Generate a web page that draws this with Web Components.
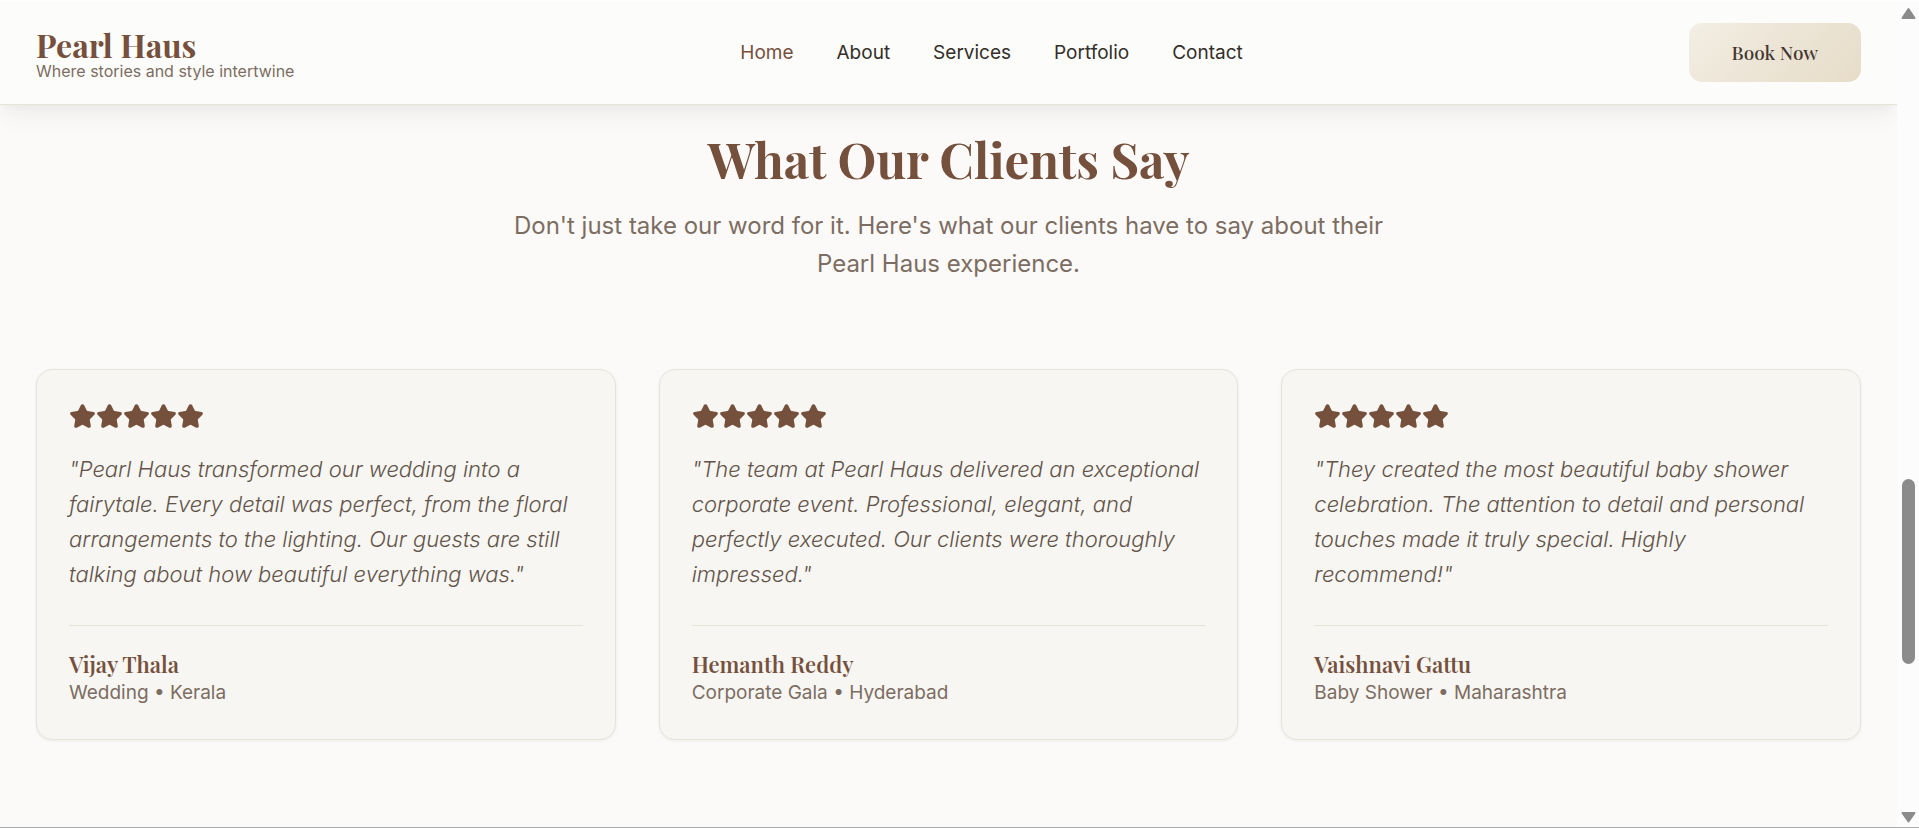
<!DOCTYPE html>
<html lang="en">
<head>
<meta charset="utf-8">
<meta name="viewport" content="width=device-width, initial-scale=1">
<title>Pearl Haus</title>
<style>
  :root {
    --brown: #75503d;
    --muted: #7c6d62;
    --ink: #332e29;
    --line: #e6e4da;
    --page: #fcfaf9;
    --card: #f7f6f2;
    --sans: Inter, "Liberation Sans", sans-serif;
    --serif: "Playfair Display", "Liberation Serif", serif;
  }
  body { margin: 0; font-family: var(--sans); background: var(--page); color: var(--ink); }
</style>
</head>
<body>
<ph-window>
  <ph-header slot="header">
    <ph-link href="#home" current>Home</ph-link>
    <ph-link href="#about">About</ph-link>
    <ph-link href="#services">Services</ph-link>
    <ph-link href="#portfolio">Portfolio</ph-link>
    <ph-link href="#contact">Contact</ph-link>
  </ph-header>
  <ph-testimonials>
    <span slot="title">What Our Clients Say</span>
    <span slot="lead">Don't just take our word for it. Here's what our clients have to say about their Pearl Haus experience.</span>
    <ph-review>"Pearl Haus transformed our wedding into a fairytale. Every detail was perfect, from the floral arrangements to the lighting. Our guests are still talking about how beautiful everything was."<span slot="name">Vijay Thala</span><span slot="event">Wedding • Kerala</span></ph-review>
    <ph-review>"The team at Pearl Haus delivered an exceptional corporate event. Professional, elegant, and perfectly executed. Our clients were thoroughly impressed."<span slot="name">Hemanth Reddy</span><span slot="event">Corporate Gala • Hyderabad</span></ph-review>
    <ph-review>"They created the most beautiful baby shower celebration. The attention to detail and personal touches made it truly special. Highly recommend!"<span slot="name">Vaishnavi Gattu</span><span slot="event">Baby Shower • Maharashtra</span></ph-review>
  </ph-testimonials>
</ph-window>

<script>
const define = (name, html) => customElements.define(name, class extends HTMLElement {
  constructor() {
    super();
    const t = document.createElement('template');
    t.innerHTML = html;
    this.attachShadow({ mode: 'open' }).append(t.content.cloneNode(true));
  }
});

/* Viewport frame: header, scrolling content and the scroll track */
define('ph-window', `
<style>
  :host { display: grid; grid-template-columns: 1fr 22px; min-height: 100vh; box-sizing: border-box;
    border-top: 1px solid #fff; border-bottom: 1px solid #ababab; }
  .page { display: flex; flex-direction: column; min-width: 0; overflow: hidden; }
</style>
<div class="page"><slot name="header"></slot><slot></slot></div>
<ph-scroll></ph-scroll>`);

define('ph-scroll', `
<style>
  :host { display: flex; flex-direction: column; align-items: center; background: #fcfcfc; padding: 6px 0 4px; }
  svg { display: block; width: 15px; height: 12px; fill: #8b8b8b; stroke: #8b8b8b; stroke-width: 2; stroke-linejoin: round; }
  .track { flex: 1; width: 13px; display: grid; grid-template-rows: 459fr 184fr 147fr; }
  .thumb { grid-row: 2; background: #8b8b8b; border-radius: 7px; }
</style>
<svg viewBox="0 0 15 12" aria-hidden="true"><path d="M7.5 2 13.5 11H1.5Z"/></svg>
<div class="track"><div class="thumb"></div></div>
<svg viewBox="0 0 15 12" aria-hidden="true"><path d="M7.5 10.5 13.5 2H1.5Z"/></svg>`);

define('ph-header', `
<style>
  :host { display: block; position: relative; background: #fcfcfa; border-bottom: 1px solid var(--line);
    box-shadow: 0 14px 20px -4px rgba(60, 55, 50, .07), 0 5px 8px -5px rgba(60, 55, 50, .04); }
  header { display: flex; justify-content: space-between; align-items: center; padding: 22px 36px; }
  .brand { display: flex; flex-direction: column; padding-top: 5px; text-decoration: none; }
  .name { font: 700 32px/32px var(--serif); color: var(--brown); }
  .tag { font-size: 16px; line-height: 20px; color: var(--muted); }
  nav { display: flex; gap: 43px; }
  button { border: 0; border-radius: 13px; padding: 0 43px; height: 59px; color: #443730; cursor: pointer;
    font: 500 19px/27px var(--serif); background: linear-gradient(135deg, #f3efe4, #eee7da 35%, #e6dcc7); }
</style>
<header>
  <a class="brand" href="#home"><span class="name">Pearl Haus</span><span class="tag">Where stories and style intertwine</span></a>
  <nav aria-label="Main"><slot></slot></nav>
  <button type="button">Book Now</button>
</header>`);

customElements.define('ph-link', class extends HTMLElement {
  constructor() {
    super();
    this.attachShadow({ mode: 'open' }).innerHTML = `
<style>
  :host { display: block; }
  a { color: var(--ink); text-decoration: none; font-size: 19px; line-height: 27px; }
  :host([current]) a { color: var(--brown); }
</style>
<a><slot></slot></a>`;
  }
  connectedCallback() { this.shadowRoot.querySelector('a').href = this.getAttribute('href'); }
});

define('ph-testimonials', `
<style>
  :host { display: block; padding: 27px 36px 86px; }
  .intro { text-align: center; margin-bottom: 86px; }
  h2 { margin: 0 0 21px; font: 700 49px/54px var(--serif); color: var(--brown); }
  p { margin: 0 auto; max-width: 907px; font-size: 24px; line-height: 38px; color: var(--muted); }
  .cards { display: grid; grid-template-columns: repeat(3, 1fr); gap: 43px; }
</style>
<section>
  <div class="intro"><h2><slot name="title"></slot></h2><p><slot name="lead"></slot></p></div>
  <div class="cards"><slot></slot></div>
</section>`);

define('ph-star', `
<style>
  :host { display: block; width: 27px; height: 27px; }
  svg { display: block; width: 100%; height: 100%; fill: var(--brown); stroke: var(--brown); stroke-width: 2; stroke-linejoin: round; }
</style>
<svg viewBox="0 0 24 24" aria-hidden="true"><path d="M11.525 2.295a.53.53 0 0 1 .95 0l2.31 4.679a2.123 2.123 0 0 0 1.595 1.16l5.166.756a.53.53 0 0 1 .294.904l-3.736 3.638a2.123 2.123 0 0 0-.611 1.878l.882 5.14a.53.53 0 0 1-.771.56l-4.618-2.428a2.122 2.122 0 0 0-1.973 0L6.396 21.01a.53.53 0 0 1-.77-.56l.881-5.139a2.122 2.122 0 0 0-.611-1.879L2.16 9.795a.53.53 0 0 1 .294-.906l5.165-.755a2.122 2.122 0 0 0 1.597-1.16z"/></svg>`);

define('ph-review', `
<style>
  :host { display: block; background: var(--card); border: 1px solid var(--line); border-radius: 16px;
    padding: 33px 32px; box-shadow: 0 1px 3px rgba(60, 45, 35, .08); }
  article { display: flex; flex-direction: column; }
  .stars { display: flex; margin-bottom: 22px; }
  blockquote { margin: 0 0 33px; font-size: 22px; line-height: 35px; font-style: italic; font-weight: 300; color: #63544a; }
  footer { border-top: 1px solid var(--line); padding-top: 22px; }
  .name { font: 600 22px/32px var(--serif); color: var(--brown); }
  .event { font-size: 19px; line-height: 26px; color: var(--muted); }
</style>
<article>
  <div class="stars" role="img" aria-label="5 out of 5 stars"><ph-star></ph-star><ph-star></ph-star><ph-star></ph-star><ph-star></ph-star><ph-star></ph-star></div>
  <blockquote><slot></slot></blockquote>
  <footer><div class="name"><slot name="name"></slot></div><div class="event"><slot name="event"></slot></div></footer>
</article>`);
</script>
</body>
</html>
